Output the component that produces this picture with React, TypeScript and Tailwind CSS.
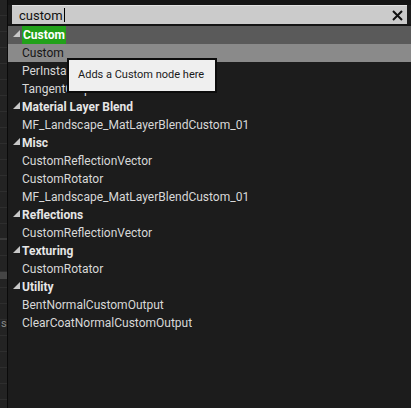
import React from "react";

interface Row {
  label: string;
  header?: boolean;
  match?: boolean;
  selected?: boolean;
}

const rows: Row[] = [
  { label: "Custom", header: true, match: true },
  { label: "Custom", selected: true },
  { label: "PerInstanceCustomData" },
  { label: "TangentOutput" },
  { label: "Material Layer Blend", header: true },
  { label: "MF_Landscape_MatLayerBlendCustom_01" },
  { label: "Misc", header: true },
  { label: "CustomReflectionVector" },
  { label: "CustomRotator" },
  { label: "MF_Landscape_MatLayerBlendCustom_01" },
  { label: "Reflections", header: true },
  { label: "CustomReflectionVector" },
  { label: "Texturing", header: true },
  { label: "CustomRotator" },
  { label: "Utility", header: true },
  { label: "BentNormalCustomOutput" },
  { label: "ClearCoatNormalCustomOutput" },
];

const Arrow: React.FC = () => (
  <svg width="7" height="7" viewBox="0 0 7 7" className="mr-[2px] mt-[-3px] shrink-0">
    <polygon points="7,0 7,7 0,7" fill="#c8c8c8" />
  </svg>
);

const textColor = (row: Row) => {
  if (row.match) return "bg-[#22a11a] px-[1px] font-bold text-white";
  if (row.header) return "font-bold text-[#e6e6e6]";
  if (row.selected) return "text-[#161616]";
  return "text-[#d8d8d8]";
};

const App: React.FC = () => {
  return (
    <div
      className="relative flex h-[408px] w-[411px] overflow-hidden bg-[#1c1c1c] text-[12px]"
      style={{ fontFamily: "Roboto, 'Noto Sans', sans-serif" }}
    >
      {/* graph canvas peeking out on the left */}
      <div className="relative h-full w-[7px] shrink-0 bg-[#232323]">
        <div className="flex flex-col">
          {Array.from({ length: 26 }).map((_, i) => (
            <div key={i} className="h-[16px] border-b border-[#2e2e2e]" />
          ))}
        </div>
        <div className="absolute left-0 top-[272px] h-[7px] w-[7px] bg-[#454545]" />
        <div className="absolute left-0 top-[238px] h-[2px] w-[7px] bg-[#3a3a3a]" />
        <div className="absolute left-[1px] top-[316px] text-[11px] text-[#8a8a8a]">s</div>
      </div>
      <div className="w-[1px] shrink-0 bg-[#0a0a0a]" />

      {/* menu */}
      <div className="flex flex-1 flex-col">
        <div className="h-[5px] bg-[#141414]" />
        <div className="mx-[4px] flex h-[19px] items-center border-t border-[#e2e2e2] bg-[#cbcbcb] pl-[7px] pr-[4px]">
          <span className="text-[13px] leading-none text-[#111]">custom</span>
          <span className="ml-[1px] h-[14px] w-[1px] bg-black" />
          <span className="flex-1" />
          <svg width="11" height="11" viewBox="0 0 11 11">
            <path d="M1 1 L10 10 M10 1 L1 10" stroke="#111" strokeWidth="2" />
          </svg>
        </div>
        <div className="h-[2px] bg-[#141414]" />

        <div className="flex flex-col">
          {rows.map((row, i) => (
            <div
              key={i}
              className={`flex h-[18px] items-center pl-[5px] ${
                i === 0 ? "bg-[#5a5a5a]" : row.selected ? "bg-[#8a8a8a]" : ""
              }`}
            >
              {row.header ? <Arrow /> : <span className="w-[9px] shrink-0" />}
              <span className={`whitespace-nowrap ${textColor(row)}`}>{row.label}</span>
            </div>
          ))}
        </div>
      </div>

      {/* tooltip */}
      <div className="absolute left-[67px] top-[58px] flex h-[35px] w-[150px] items-center whitespace-nowrap border-2 border-[#0c0c0c] bg-[#efefef] pl-[9px] text-[11px] text-[#1a1a1a]">
        Adds a Custom node here
      </div>
    </div>
  );
};

export default App;
